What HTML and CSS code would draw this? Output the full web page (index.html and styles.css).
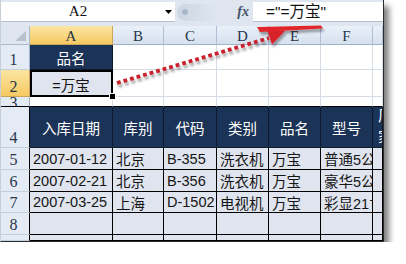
FILE: index.html
```html
<!DOCTYPE html>
<html lang="zh-CN">
<head>
    <meta charset="UTF-8">
    <title>A2 引用</title>
    <link rel="stylesheet" href="styles.css">
</head>
<body>
    <div class="shot">
        <div class="formula-bar">
            <div class="name-box">
                <span class="name">A2</span>
                <svg class="drop" width="7" height="4" viewBox="0 0 7 4"><polygon points="0,0 7,0 3.5,4" fill="#000"/></svg>
            </div>
            <div class="splitter"><span class="knob"><span class="dot"></span></span></div>
            <div class="fx">fx</div>
            <div class="formula">="=万宝"</div>
        </div>

        <div class="sheet">
            <div class="corner"><span class="tri"></span></div>
            <div class="hd sel">A</div>
            <div class="hd">B</div>
            <div class="hd">C</div>
            <div class="hd">D</div>
            <div class="hd">E</div>
            <div class="hd">F</div>
            <div class="hd"></div>

            <div class="rh">1</div>
            <div class="th">品名</div>
            <div class="e"></div><div class="e"></div><div class="e"></div><div class="e"></div><div class="e"></div><div class="e"></div>

            <div class="rh sel">2</div>
            <div class="c active">=万宝<span class="handle"></span></div>
            <div class="e"></div><div class="e"></div><div class="e"></div><div class="e"></div><div class="e"></div><div class="e"></div>

            <div class="rh short"><span>3</span></div>
            <div class="e edge"></div><div class="e edge"></div><div class="e edge"></div><div class="e edge"></div><div class="e edge"></div><div class="e edge"></div><div class="e edge"></div>

            <div class="rh dark">4</div>
            <div class="th">入库日期</div>
            <div class="th">库别</div>
            <div class="th">代码</div>
            <div class="th">类别</div>
            <div class="th">品名</div>
            <div class="th">型号</div>
            <div class="th cut"><span>厂家</span></div>

            <div class="rh dark">5</div>
            <div class="c">2007-01-12</div>
            <div class="c">北京</div>
            <div class="c">B-355</div>
            <div class="c">洗衣机</div>
            <div class="c">万宝</div>
            <div class="c">普通5公斤</div>
            <div class="c"></div>

            <div class="rh dark">6</div>
            <div class="c">2007-02-21</div>
            <div class="c">北京</div>
            <div class="c">B-356</div>
            <div class="c">洗衣机</div>
            <div class="c">万宝</div>
            <div class="c">豪华5公斤</div>
            <div class="c"></div>

            <div class="rh dark">7</div>
            <div class="c">2007-03-25</div>
            <div class="c">上海</div>
            <div class="c">D-1502</div>
            <div class="c">电视机</div>
            <div class="c">万宝</div>
            <div class="c">彩显21寸</div>
            <div class="c"></div>

            <div class="rh dark">8</div>
            <div class="c"></div><div class="c"></div><div class="c"></div><div class="c"></div><div class="c"></div><div class="c"></div><div class="c"></div>

            <div class="rh dark"></div>
            <div class="c"></div><div class="c"></div><div class="c"></div><div class="c"></div><div class="c"></div><div class="c"></div><div class="c"></div>
        </div>

        <!-- red annotation from A2 up to the formula -->
        <svg class="marks" width="383" height="241" viewBox="0 0 383 241">
            <defs>
                <filter id="shade" x="-10%" y="-30%" width="130%" height="180%">
                    <feDropShadow dx="1.5" dy="3" stdDeviation="1.2" flood-color="#000" flood-opacity="0.35"/>
                </filter>
            </defs>
            <g filter="url(#shade)">
                <line x1="116" y1="83" x2="268" y2="38" stroke="#c9212d" stroke-width="3.8" stroke-dasharray="3.8 3"/>
                <polygon points="284,31 271,44.5 265.5,28.5" fill="#d8232c"/>
                <polygon points="256,27 320,25.5 322,28.5 259,32" fill="#e0262a"/>
            </g>
        </svg>
    </div>
</body>
</html>
```

FILE: styles.css
```css
body {
    margin: 0;
    background: #ffffff;
    font-family: "Liberation Sans", "Noto Sans CJK SC", sans-serif;
}
.shot {
    position: relative;
    width: 384px;
    height: 242px;
    box-sizing: border-box;
    border-left: 1px solid #c6ced8;
    border-right: 1px solid #2b2b2b;
    border-bottom: 1px solid #2b2b2b;
    box-shadow: 5px 6px 6px rgba(0, 0, 0, 0.5);
    overflow: hidden;
}
.formula-bar {
    display: flex;
    height: 20px;
    padding: 2px 0 4px;
    background: #dfe6ef;
}
.name-box {
    width: 174px;
    display: flex;
    align-items: center;
    background: #ffffff;
    border-bottom: 1px solid #b4c1d1;
    box-sizing: border-box;
}
.name {
    flex: 1;
    text-align: center;
    padding-left: 2px;
    font-family: "Liberation Serif", serif;
    font-size: 15px;
    color: #111111;
}
.drop {
    margin: 1px 3px 0 12px;
}
.splitter {
    width: 58px;
    display: flex;
    align-items: center;
}
.knob {
    width: 40px;
    height: 17px;
    margin-left: 2px;
    border-radius: 9px 0 0 9px;
    background: linear-gradient(to right, #ccd6e2, #dfe6ef);
    display: flex;
    align-items: center;
}
.dot {
    width: 6px;
    height: 6px;
    margin-left: 5px;
    border-radius: 50%;
    background: #aab7c8;
}
.fx {
    width: 20px;
    box-sizing: border-box;
    padding-right: 4px;
    text-align: right;
    font-family: "Liberation Serif", serif;
    font-style: italic;
    font-weight: bold;
    font-size: 14px;
    line-height: 20px;
    color: #45536a;
}
.formula {
    flex: 1;
    padding-left: 13px;
    background: #ffffff;
    border-bottom: 1px solid #b4c1d1;
    font-size: 15.5px;
    line-height: 19px;
    color: #111111;
}
.sheet {
    display: grid;
    grid-template-columns: 29px 83px 51px 53px 52px 52px 52px 10px;
    grid-template-rows: 19px 25px 27px 10px 41px 22px 22px 21px 22px 6px;
}
.sheet > div {
    box-sizing: border-box;
    border-right: 1px solid #d5dce5;
    border-bottom: 1px solid #d5dce5;
}
.corner {
    position: relative;
    background: #dfe6ef;
    border-color: #a9bacd !important;
}
.tri {
    position: absolute;
    right: 3px;
    bottom: 3px;
    width: 0;
    height: 0;
    border-left: 11px solid transparent;
    border-bottom: 10px solid #b7c2ce;
}
.sheet > .hd {
    display: flex;
    align-items: center;
    justify-content: center;
    padding-top: 2px;
    background: linear-gradient(#e9f0f9, #d6e1ee);
    border-right-color: #b0c0d4;
    border-bottom-color: #9fb2c9;
    font-family: "Liberation Serif", serif;
    font-size: 15px;
    color: #27354a;
}
.sheet > .rh {
    display: flex;
    align-items: flex-end;
    justify-content: center;
    padding: 0 3px 1px 0;
    background: #e4ebf4;
    border-right-color: #9fb2c9;
    border-bottom-color: #c3cfdd;
    font-family: "Liberation Serif", serif;
    font-size: 16px;
    line-height: 16px;
    color: #27354a;
}
.sheet > .sel {
    background: linear-gradient(#fce5a2, #f6c962);
    border-right-color: #c9a65a;
    border-bottom-color: #c9a65a;
}
.sheet > .rh.short {
    align-items: flex-start;
    overflow: hidden;
    border-bottom-color: #000000;
}
.rh.short span {
    margin-top: -2px;
}
.sheet > .rh.dark {
    border-right-color: #000000;
}
.sheet > .edge {
    border-bottom-color: #000000;
}
.sheet > .th {
    display: flex;
    align-items: center;
    justify-content: center;
    background: #1c3358;
    border-color: #0e1a2e;
    font-size: 14.5px;
    color: #ffffff;
    white-space: nowrap;
    overflow: hidden;
}
.sheet > .th.cut {
    justify-content: flex-start;
}
.th.cut span {
    width: 15px;
    margin-left: 5px;
    white-space: normal;
    line-height: 21px;
}
.sheet > .c {
    display: flex;
    align-items: center;
    padding-left: 3px;
    background: #dfe4ee;
    border-color: #000000;
    font-size: 14.5px;
    color: #151515;
    white-space: nowrap;
    overflow: hidden;
}
.sheet > .c.active {
    position: relative;
    overflow: visible;
    justify-content: center;
    padding: 2px 0 0;
    border-right-color: #000000;
    border-bottom-color: #000000;
    box-shadow: inset 2px 0 0 #000, inset 0 2px 0 #000, inset -1px 0 0 #000, inset 0 -1px 0 #000;
}
.handle {
    position: absolute;
    right: -4px;
    bottom: -4px;
    width: 5px;
    height: 5px;
    background: #000000;
    border: 1px solid #ffffff;
}
.marks {
    position: absolute;
    left: 0;
    top: 0;
    pointer-events: none;
}
```
